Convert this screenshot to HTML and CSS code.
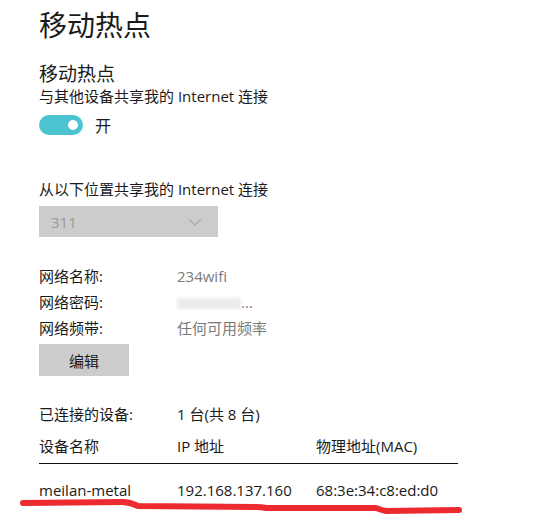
FILE: index.html
```html
<!DOCTYPE html>
<html lang="zh-CN">
<head>
  <meta charset="UTF-8" />
  <title>移动热点</title>
  <link rel="stylesheet" href="styles.css">
</head>
<body>
  <div class="page">
    <h1 class="title">移动热点</h1>
    <h2 class="subtitle">移动热点</h2>
    <div class="desc">与其他设备共享我的 Internet 连接</div>
    <div class="toggle-row">
      <span class="toggle"><span class="knob"></span></span>
      <span class="toggle-label">开</span>
    </div>

    <div class="label">从以下位置共享我的 Internet 连接</div>
    <div class="select">
      <span>311</span>
      <svg class="chevron" width="14" height="8" viewBox="0 0 14 8"><path d="M1 1 L7 7 L13 1" fill="none" stroke="#a9a9a9" stroke-width="1.2"/></svg>
    </div>

    <div class="info">
      <div class="row"><span class="key">网络名称:</span><span class="val">234wifi</span></div>
      <div class="row"><span class="key">网络密码:</span><span class="val"><span class="blur"></span>...</span></div>
      <div class="row"><span class="key">网络频带:</span><span class="val">任何可用频率</span></div>
    </div>
    <button class="btn">编辑</button>

    <div class="row devices"><span class="key">已连接的设备:</span><span>1 台(共 8 台)</span></div>
    <div class="table">
      <div class="thead">
        <span class="c1">设备名称</span><span class="c2">IP 地址</span><span>物理地址(MAC)</span>
      </div>
      <div class="trow">
        <span class="c1">meilan-metal</span><span class="c2">192.168.137.160</span><span>68:3e:34:c8:ed:d0</span>
      </div>
    </div>
  </div>

  <!-- red marker scribble -->
  <svg class="scribble" width="549" height="515" viewBox="0 0 549 515">
    <path d="M23 503 L122 502 Q130 502 138 506 L256 507 Q262 507 266 508 L376 508 Q381 510 386 511 L459 510" fill="none" stroke="#ec2a2f" stroke-width="6" stroke-linecap="round" stroke-linejoin="round"/>
  </svg>
</body>
</html>
```

FILE: styles.css
```css
body {
  margin: 0;
  background: #fff;
  color: #1a1a1a;
  font-family: "Open Sans", "Noto Sans CJK SC", sans-serif;
  font-size: 15px;
}
.page {
  padding-left: 39px;
}
.title {
  margin: 7px 0 0;
  font-size: 28px;
  font-weight: normal;
  line-height: 36px;
}
.subtitle {
  margin: 19px 0 0;
  font-size: 19px;
  font-weight: normal;
  line-height: 24px;
}
.desc {
  line-height: 20px;
}
.toggle-row {
  display: flex;
  align-items: center;
  gap: 12px;
  margin-top: 9px;
  height: 20px;
}
.toggle {
  width: 44px;
  height: 20px;
  border-radius: 10px;
  background: #4cc4d0;
  position: relative;
}
.knob {
  position: absolute;
  right: 5px;
  top: 5px;
  width: 10px;
  height: 10px;
  border-radius: 50%;
  background: #fff;
}
.toggle-label {
  font-size: 16px;
}
.label {
  margin-top: 44px;
  line-height: 20px;
}
.select {
  margin-top: 7px;
  width: 179px;
  height: 31px;
  background: #cccccc;
  display: flex;
  align-items: center;
  justify-content: space-between;
  padding: 0 12px;
  box-sizing: border-box;
  color: #9a9a9a;
}
.chevron {
  margin-right: 4px;
}
.info {
  margin-top: 26px;
}
.row {
  display: flex;
  line-height: 26px;
}
.key {
  width: 138px;
}
.val {
  color: #7a7a7a;
}
.blur {
  display: inline-block;
  width: 64px;
  height: 11px;
  background: #ececec;
  filter: blur(1.5px);
  vertical-align: -1px;
}
.btn {
  display: block;
  margin-top: 3px;
  width: 90px;
  height: 32px;
  border: none;
  background: #cccccc;
  font-family: inherit;
  font-size: 15px;
  color: #1a1a1a;
  padding: 0;
}
.devices {
  margin-top: 25px;
}
.table {
  width: 419px;
  margin-top: 6px;
}
.thead, .trow {
  display: flex;
  line-height: 26px;
}
.thead {
  padding-bottom: 4px;
  border-bottom: 1px solid #111;
}
.trow {
  margin-top: 13px;
}
.c1 {
  width: 138px;
}
.c2 {
  width: 139px;
}
.scribble {
  position: absolute;
  left: 0;
  top: 0;
  pointer-events: none;
}
```
